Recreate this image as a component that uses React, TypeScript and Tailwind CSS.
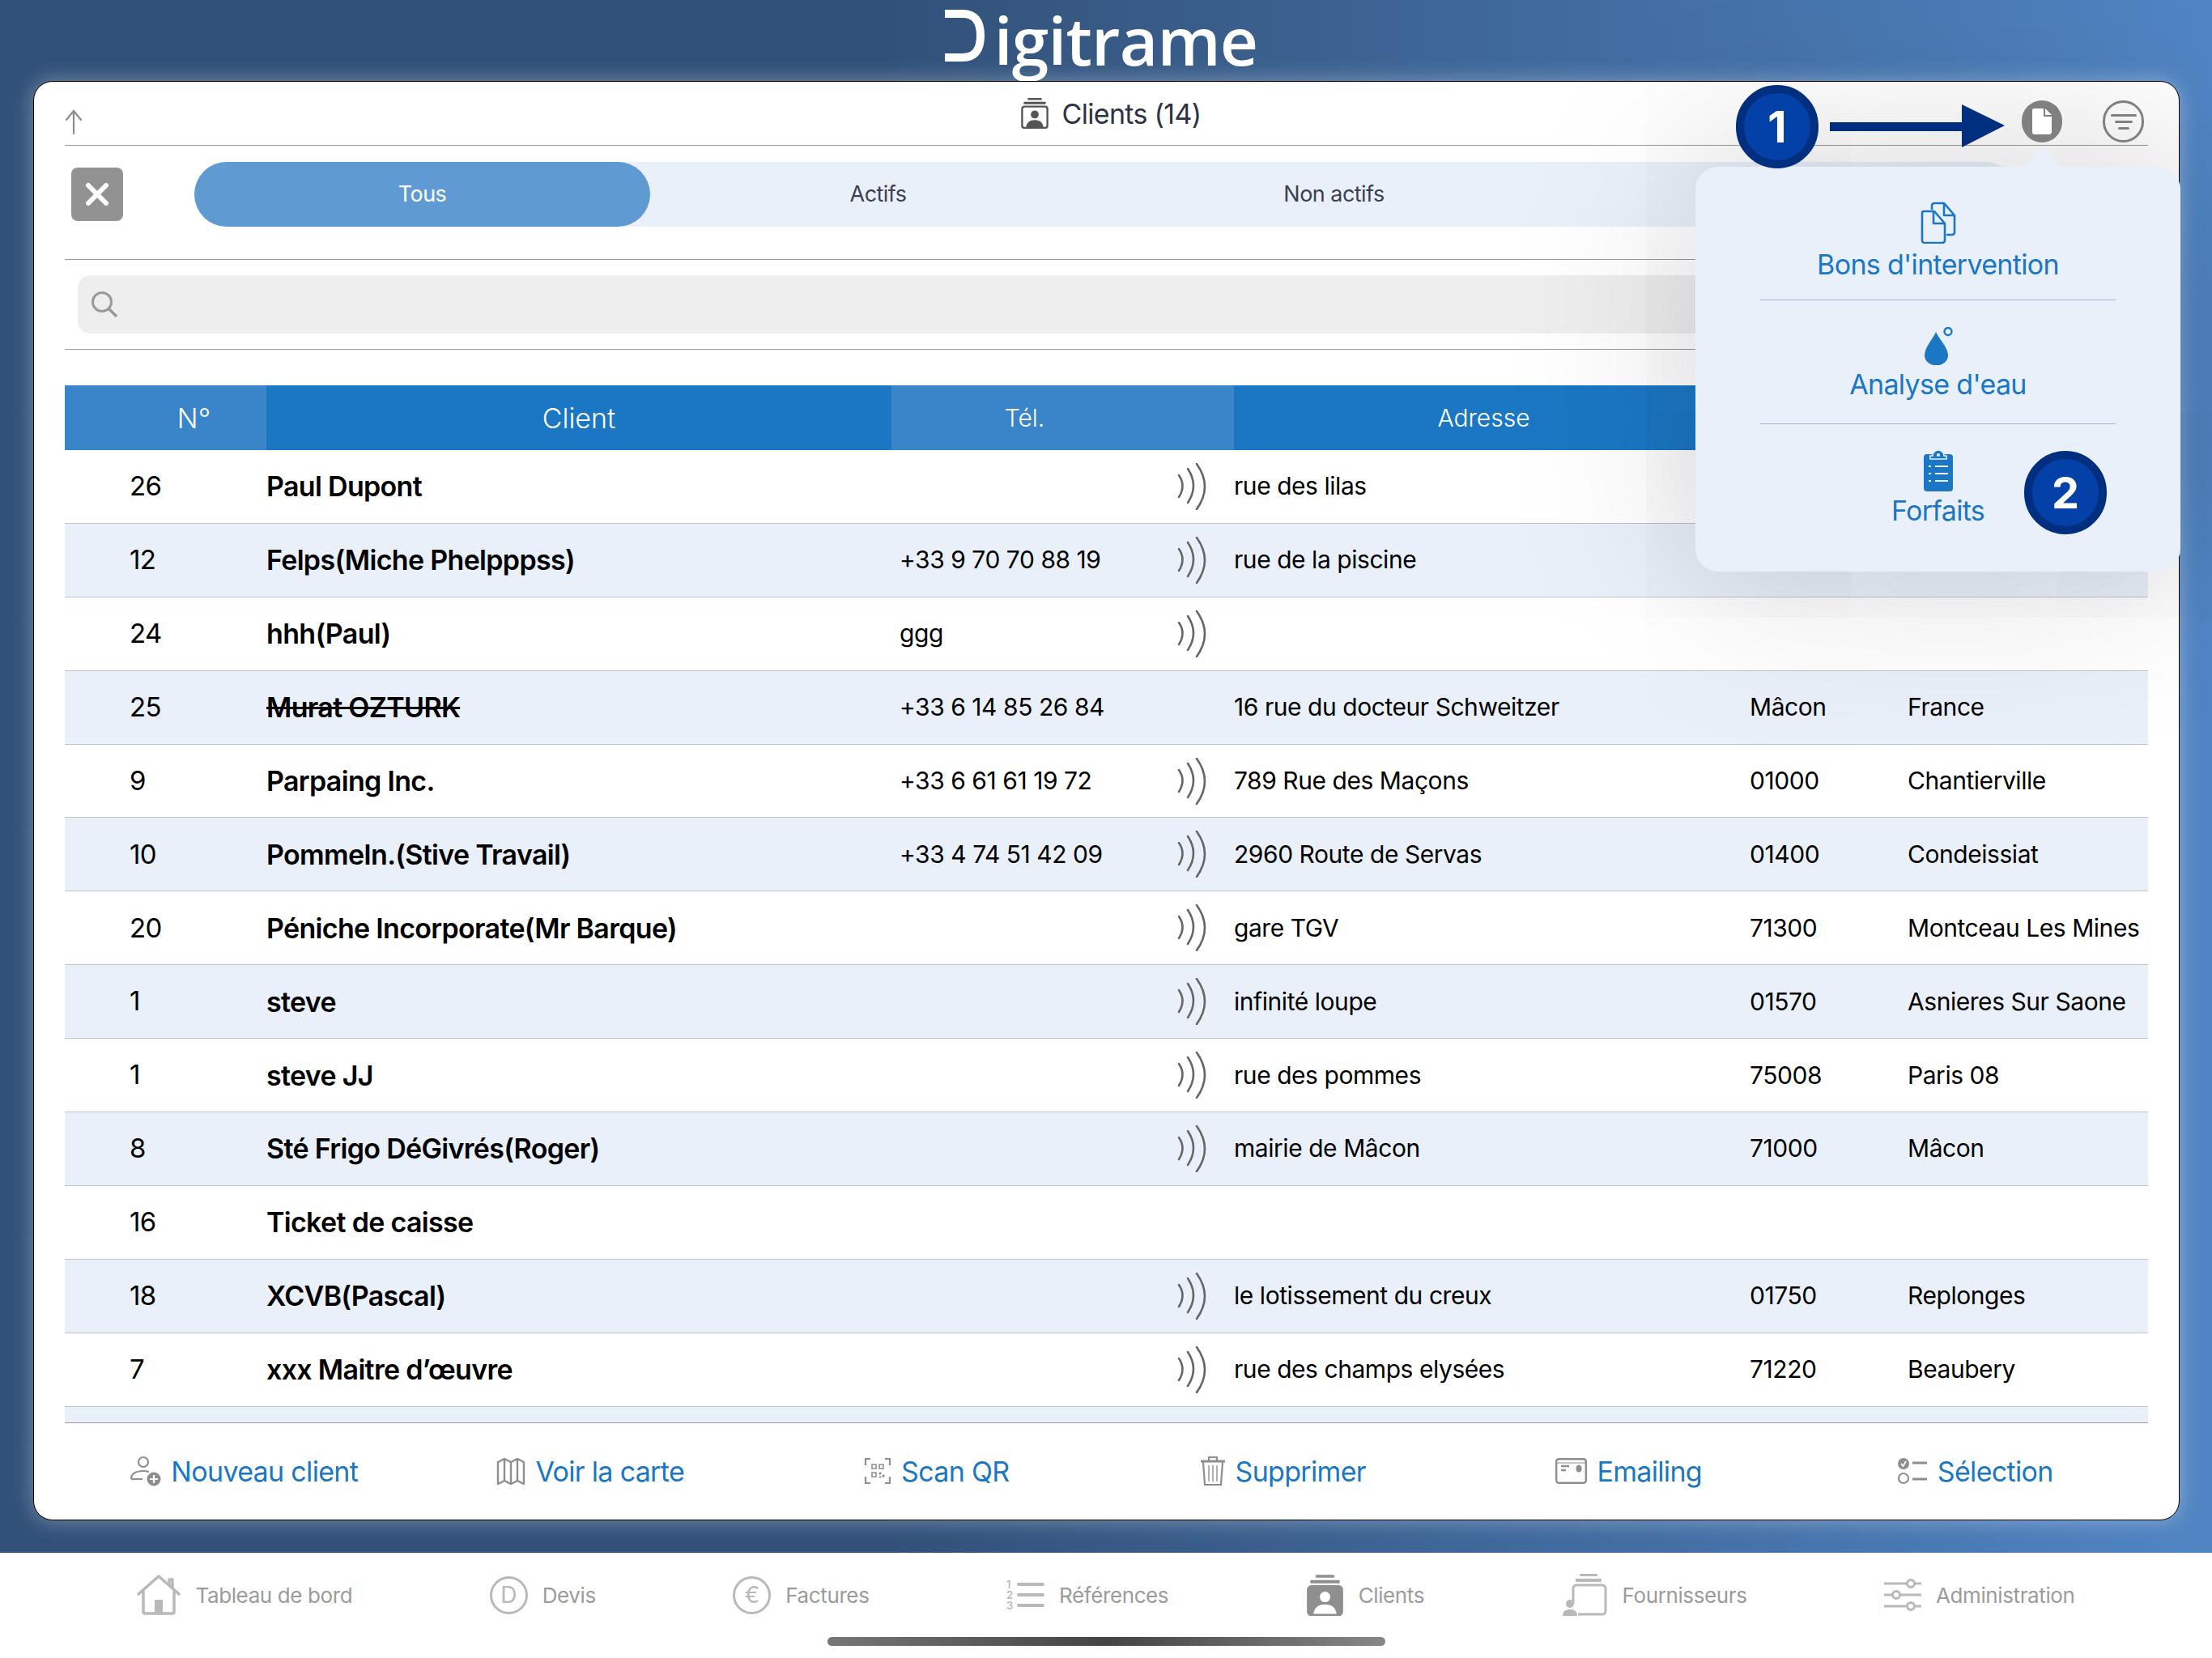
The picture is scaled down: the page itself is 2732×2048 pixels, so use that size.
const rows = [
  { n: "26", name: "Paul Dupont", tel: "", nfc: true, addr: "rue des lilas", cp: "", city: "" },
  { n: "12", name: "Felps(Miche Phelpppss)", tel: "+33 9 70 70 88 19", nfc: true, addr: "rue de la piscine", cp: "", city: "" },
  { n: "24", name: "hhh(Paul)", tel: "ggg", nfc: true, addr: "", cp: "", city: "" },
  { n: "25", name: "Murat OZTURK", tel: "+33 6 14 85 26 84", nfc: false, addr: "16 rue du docteur Schweitzer", cp: "Mâcon", city: "France", strike: true },
  { n: "9", name: "Parpaing Inc.", tel: "+33 6 61 61 19 72", nfc: true, addr: "789 Rue des Maçons", cp: "01000", city: "Chantierville" },
  { n: "10", name: "PommeIn.(Stive Travail)", tel: "+33 4 74 51 42 09", nfc: true, addr: "2960 Route de Servas", cp: "01400", city: "Condeissiat" },
  { n: "20", name: "Péniche Incorporate(Mr Barque)", tel: "", nfc: true, addr: "gare TGV", cp: "71300", city: "Montceau Les Mines" },
  { n: "1", name: "steve", tel: "", nfc: true, addr: "infinité loupe", cp: "01570", city: "Asnieres Sur Saone" },
  { n: "1", name: "steve JJ", tel: "", nfc: true, addr: "rue des pommes", cp: "75008", city: "Paris 08" },
  { n: "8", name: "Sté Frigo DéGivrés(Roger)", tel: "", nfc: true, addr: "mairie de Mâcon", cp: "71000", city: "Mâcon" },
  { n: "16", name: "Ticket de caisse", tel: "", nfc: false, addr: "", cp: "", city: "" },
  { n: "18", name: "XCVB(Pascal)", tel: "", nfc: true, addr: "le lotissement du creux", cp: "01750", city: "Replonges" },
  { n: "7", name: "xxx Maitre d’œuvre", tel: "", nfc: true, addr: "rue des champs elysées", cp: "71220", city: "Beaubery" },
];

function Nfc() {
  return (
    <svg width="36" height="58" viewBox="0 0 36 58" fill="none" stroke="#666" strokeWidth="2.6" strokeLinecap="round">
      <path d="M2 15Q11 28 2 42" />
      <path d="M13 7Q27 28 13 49" />
      <path d="M24 1Q44 29 24 57" />
    </svg>
  );
}

function ContactStack({ color, filled, w, h }: { color: string; filled?: boolean; w: number; h: number }) {
  return (
    <svg width={w} height={h} viewBox="0 0 36 40" fill="none">
      <rect x="9" y="1" width="18" height="2.6" rx="1" fill={color} />
      <rect x="4" y="6" width="28" height="3" rx="1" fill={color} />
      <rect x="2" y="12" width="32" height="27" rx="3" fill={filled ? color : "none"} stroke={color} strokeWidth="2.4" />
      <circle cx="18" cy="22" r="5" fill={filled ? "#fff" : color} />
      <path d="M7 38c1-7 6-9 11-9s10 2 11 9z" fill={filled ? "#fff" : color} />
    </svg>
  );
}

const footerIcons = {
  client: (
    <svg width="38" height="38" viewBox="0 0 38 38" fill="none" stroke="#8e8e8e" strokeWidth="2.2">
      <circle cx="16" cy="8" r="6" />
      <path d="M1 29c0-7 6-10 15-10 3 0 5 .4 7 1" />
      <path d="M1 29h14" />
      <circle cx="29" cy="29" r="8.5" fill="#8e8e8e" stroke="none" />
      <path d="M29 24v10M24 29h10" stroke="#fff" />
    </svg>
  ),
  map: (
    <svg width="36" height="33" viewBox="0 0 36 33" fill="none" stroke="#8e8e8e" strokeWidth="2.4" strokeLinejoin="round">
      <path d="M2 5l8-4 8 4 8-4 8 4v27l-8-4-8 4-8-4-8 4z" />
      <path d="M10 1v27M18 5v27M26 1v27" />
    </svg>
  ),
  qr: (
    <svg width="34" height="34" viewBox="0 0 34 34" fill="none" stroke="#8e8e8e" strokeWidth="2.2">
      <path d="M8 2H2v8M26 2h6v8M8 32H2v-8M26 32h6v-8" />
      <path d="M10 9h5v5h-5zM19 9h5v5h-5zM10 19h5v5h-5z" strokeWidth="1.6" />
      <path d="M19 19h2v2h-2zM23 22h2v2h-2zM19 24h2v1h-2z" fill="#8e8e8e" strokeWidth="1" />
    </svg>
  ),
  trash: (
    <svg width="32" height="38" viewBox="0 0 32 38" fill="none" stroke="#8e8e8e" strokeWidth="2.2">
      <path d="M1 7h30" strokeWidth="3" />
      <path d="M11 6V2h10v4" />
      <path d="M4 8l2 28h20l2-28" />
      <path d="M11 12v20M16 12v20M21 12v20" strokeWidth="1.4" />
    </svg>
  ),
  mail: (
    <svg width="39" height="32" viewBox="0 0 39 32" fill="none">
      <rect x="1.2" y="1.2" width="36.6" height="29.6" rx="3" stroke="#8e8e8e" strokeWidth="2.4" />
      <path d="M1 6h37" stroke="#8e8e8e" strokeWidth="1" />
      <path d="M7 10h10M7 15h6" stroke="#8e8e8e" strokeWidth="2.4" />
      <ellipse cx="29" cy="13" rx="3.5" ry="4.5" fill="#8e8e8e" />
    </svg>
  ),
  select: (
    <svg width="38" height="34" viewBox="0 0 38 34" fill="none">
      <circle cx="8" cy="8" r="7" fill="#8e8e8e" />
      <path d="M5 8l2.5 3L11 5" stroke="#fff" strokeWidth="1.8" />
      <circle cx="8" cy="26" r="6" stroke="#8e8e8e" strokeWidth="2.2" />
      <path d="M19 7h18M19 27h18" stroke="#8e8e8e" strokeWidth="3" />
    </svg>
  ),
};

const tools = [
  { icon: footerIcons.client, label: "Nouveau client" },
  { icon: footerIcons.map, label: "Voir la carte" },
  { icon: footerIcons.qr, label: "Scan QR" },
  { icon: footerIcons.trash, label: "Supprimer" },
  { icon: footerIcons.mail, label: "Emailing" },
  { icon: footerIcons.select, label: "Sélection" },
];

const tabs = [
  {
    label: "Tableau de bord",
    icon: (
      <svg width="54" height="50" viewBox="0 0 54 50" fill="none" stroke="#b9b9b9" strokeWidth="3.5" strokeLinejoin="round">
        <path d="M2 24L27 2l25 22" strokeLinecap="round" />
        <path d="M8 20v26a2 2 0 0 0 2 2h34a2 2 0 0 0 2-2V20" />
        <path d="M22 47V31h10v16z" fill="#b9b9b9" stroke="none" />
        <path d="M40 14V6h4v12" />
      </svg>
    ),
  },
  {
    label: "Devis",
    icon: (
      <div className="flex h-[47px] w-[47px] items-center justify-center rounded-full border-[3px] border-[#b9b9b9] text-[28px] leading-none text-[#b9b9b9]">D</div>
    ),
  },
  {
    label: "Factures",
    icon: (
      <div className="flex h-[47px] w-[47px] items-center justify-center rounded-full border-[3px] border-[#b9b9b9] text-[28px] leading-none text-[#b9b9b9]">€</div>
    ),
  },
  {
    label: "Références",
    icon: (
      <div className="flex w-[47px] flex-col gap-[2px] text-[13px] font-semibold leading-[11px] text-[#b9b9b9]">
        {["1", "2", "3"].map((d) => (
          <div key={d} className="flex items-center gap-[4px]">
            <span className="w-[9px]">{d}</span>
            <span className="h-[4px] flex-1 rounded-full bg-[#b9b9b9]" />
          </div>
        ))}
      </div>
    ),
  },
  { label: "Clients", icon: <ContactStack color="#8f8f8f" filled w={47} h={52} /> },
  {
    label: "Fournisseurs",
    icon: (
      <svg width="57" height="54" viewBox="0 0 57 54" fill="none">
        <rect x="22" y="1" width="22" height="3" rx="1" fill="#b9b9b9" />
        <rect x="17" y="7" width="32" height="4" rx="1" fill="#b9b9b9" />
        <path d="M14 38V19a4 4 0 0 1 4-4h32a4 4 0 0 1 4 4v28a4 4 0 0 1-4 4H20" stroke="#b9b9b9" strokeWidth="3" />
        <circle cx="10" cy="38" r="5" fill="#b9b9b9" />
        <path d="M1 53c0-6 4-8 9-8s9 2 9 8z" fill="#b9b9b9" />
      </svg>
    ),
  },
  {
    label: "Administration",
    icon: (
      <svg width="46" height="40" viewBox="0 0 46 40" fill="none" stroke="#b9b9b9" strokeWidth="3">
        <path d="M0 6h28M38 6h8M0 20h10M20 20h26M0 34h28M38 34h8" />
        <circle cx="33" cy="6" r="4.5" />
        <circle cx="15" cy="20" r="4.5" />
        <circle cx="33" cy="34" r="4.5" />
      </svg>
    ),
  },
];

function Badge({ n, pos }: { n: string; pos: string }) {
  return (
    <div className={`absolute flex h-[103px] w-[102px] items-center justify-center rounded-full border-[10px] border-[#002f80] bg-[#0340a8] text-[54px] font-bold text-white ${pos}`}>
      {n}
    </div>
  );
}

export default function App() {
  return (
    <div className="relative h-[2048px] w-[2732px] overflow-hidden bg-white font-['Inter',sans-serif] text-black">
      <div className="flex h-[1918px] flex-col bg-gradient-to-r from-[#325179] from-40% to-[#5085c4] pl-[41px] pr-[40px]">
        {/* logo */}
        <div className="flex h-[100px] items-start justify-center pr-[14px] pt-[11px] text-white">
          <svg width="52" height="66" viewBox="0 0 52 66" fill="none" stroke="#fff" strokeWidth="10" className="mr-[10px]">
            <path d="M1 6h22q22 0 22 27t-22 27H1" />
          </svg>
          <span className="font-['Open_Sans',sans-serif] text-[82px] font-semibold leading-[76px] tracking-[-0.01em]">igitrame</span>
        </div>

        <div className="flex h-[1778px] flex-col rounded-[24px] border border-black bg-white px-[38px] shadow-[0_0_26px_rgba(255,255,255,0.35)]">
          {/* title */}
          <div className="relative flex h-[79px] shrink-0 items-center justify-center border-b border-[#9a9a9a] pl-[10px]">
            <svg width="22" height="32" viewBox="0 0 22 32" fill="none" stroke="#8c8c8c" strokeWidth="2.2" strokeLinecap="round" className="absolute left-0 top-[34px]">
              <path d="M11 30V2M2 13L11 2l9 11" />
            </svg>
            <div className="mb-[2px] mr-[16px]"><ContactStack color="#555" w={36} h={39} /></div>
            <span className="text-[34px] tracking-[-0.02em] text-[#2d3344]">Clients (14)</span>
          </div>

          {/* filter */}
          <div className="flex h-[141px] shrink-0 items-start border-b border-[#9a9a9a] pt-[20px]">
            <div className="ml-[8px] mt-[7px] flex h-[66px] w-[64px] items-center justify-center rounded-[8px] bg-[#929292]">
              <svg width="30" height="30" viewBox="0 0 30 30" stroke="#fff" strokeWidth="6" strokeLinecap="round">
                <path d="M4 4l22 22M26 4L4 26" />
              </svg>
            </div>
            <div className="ml-[88px] grid h-[80px] w-[2252px] grid-cols-4 rounded-[40px] bg-[#e9f0fa] text-[27px] tracking-[-0.02em] text-[#3c4152]">
              <div className="flex items-center justify-center rounded-[40px] bg-[#5f9ad3] text-white">Tous</div>
              <div className="flex items-center justify-center">Actifs</div>
              <div className="flex items-center justify-center">Non actifs</div>
              <div />
            </div>
          </div>

          {/* search */}
          <div className="h-[111px] shrink-0 border-b border-[#9a9a9a] pl-[16px] pr-[12px] pt-[19px]">
            <div className="flex h-[72px] items-center rounded-[16px] bg-[#eeeeee] pl-[16px]">
              <svg width="34" height="34" viewBox="0 0 34 34" fill="none" stroke="#9a9a9a" strokeWidth="3">
                <circle cx="14" cy="14" r="11.5" />
                <path d="M22 22l10 10" strokeWidth="3.6" />
              </svg>
            </div>
          </div>

          {/* table */}
          <div className="mt-[44px] grid h-[80px] shrink-0 grid-cols-[249px_772px_423px_637px_195px_1fr] text-white">
            <div className="flex items-center justify-center bg-[#3a85c9] pl-[70px] text-[34px] font-light">N°</div>
            <div className="flex items-center justify-center bg-[#1b77c3] text-[34px] font-light">Client</div>
            <div className="flex items-center justify-center bg-[#3a85c9] pr-[94px] text-[30px] font-light">Tél.</div>
            <div className="flex items-center justify-center bg-[#1b77c3] pr-[20px] text-[30px] font-light">Adresse</div>
            <div className="bg-[#3a85c9]" />
            <div className="bg-[#1b77c3]" />
          </div>
          {rows.map((r, i) => (
            <div
              key={r.name}
              className={`grid h-[90.9px] shrink-0 grid-cols-[249px_772px_423px_637px_195px_1fr] items-center border-b border-[#bfc3cb] text-[30px] tracking-[-0.015em] ${i % 2 ? "bg-[#e9f0fa]" : "bg-white"}`}
            >
              <div className="pl-[80px] text-[33px] tracking-[-0.02em]">{r.n}</div>
              <div className={`text-[34px] font-semibold tracking-[-0.02em] ${r.strike ? "line-through" : ""}`}>{r.name}</div>
              <div className="flex items-center justify-between pl-[10px] pr-[34px]">
                <span>{r.tel}</span>
                {r.nfc && <Nfc />}
              </div>
              <div>{r.addr}</div>
              <div>{r.cp}</div>
              <div className="whitespace-nowrap">{r.city}</div>
            </div>
          ))}
          <div className="h-[20px] shrink-0 border-b border-[#9498a8] bg-[#e9f0fa]" />

          {/* actions */}
          <div className="grid flex-1 grid-cols-6 items-center pl-[8px] text-[34px] tracking-[-0.02em] text-[#1b77c3]">
            {tools.map((t) => (
              <div key={t.label} className="flex items-center justify-center gap-[12px]">
                {t.icon}
                <span>{t.label}</span>
              </div>
            ))}
          </div>
        </div>
      </div>

      {/* tab bar */}
      <div className="flex h-[104px] items-center justify-evenly text-[26px] tracking-[-0.015em] text-[#9b9b9b]">
        {tabs.map((t) => (
          <div key={t.label} className="flex items-center gap-[18px]">
            {t.icon}
            <span>{t.label}</span>
          </div>
        ))}
      </div>
      <div className="mx-auto h-[11px] w-[689px] rounded-full bg-gradient-to-r from-[#777] via-[#444] to-[#888]" />

      {/* popover */}
      <div className="absolute left-[2094px] top-[206px] h-[500px] w-[599px] rounded-[28px] bg-[#e9f0fa] text-[34px] leading-[40px] tracking-[-0.02em] text-[#1b77c3] shadow-[0_0_220px_rgba(0,0,0,0.22)]">
        <div className="mx-[80px] flex h-[165px] flex-col items-center border-b border-[#a9b4cc] pt-[43px]">
          <svg width="44" height="52" viewBox="0 0 44 52" fill="none" stroke="#1b77c3" strokeWidth="2.6" strokeLinejoin="round">
            <path d="M14 10V5a3 3 0 0 1 3-3h12l13 15v21a3 3 0 0 1-3 3h-7" />
            <path d="M29 2v15h13" />
            <path d="M4 12h13l13 15v21a3 3 0 0 1-3 3H5a3 3 0 0 1-3-3V14a2 2 0 0 1 2-2z" fill="#e9f0fa" />
            <path d="M16 12v15h14" />
          </svg>
          <span className="mt-[6px]">Bons d'intervention</span>
        </div>
        <div className="mx-[80px] flex h-[153px] flex-col items-center border-b border-[#a9b4cc] pt-[33px]">
          <svg width="36" height="47" viewBox="0 0 36 47" fill="#1b77c3">
            <path d="M15 6C11 15 1 25 1 35a14 12 0 0 0 29 0C30 25 19 15 15 6z" />
            <circle cx="30" cy="5.500" r="4.500" fill="none" stroke="#1b77c3" strokeWidth="2.400" />
          </svg>
          <span className="mt-[4px]">Analyse d'eau</span>
        </div>
        <div className="flex flex-col items-center pt-[31px]">
          <svg width="36" height="52" viewBox="0 0 36 52">
            <rect x="0" y="6" width="36" height="46" rx="4" fill="#1b77c3" />
            <path d="M11 8a7 7 0 0 1 14 0h3v4H8V8z" fill="#1b77c3" stroke="#e9f0fa" strokeWidth="1.6" />
            <circle cx="18" cy="7" r="2" fill="#e9f0fa" />
            <path d="M14 21h16M14 30h16M14 39h16" stroke="#e9f0fa" strokeWidth="2.2" />
            <path d="M6 21h3M6 30h3M6 39h3" stroke="#e9f0fa" strokeWidth="2.2" />
          </svg>
          <span className="mt-[4px]">Forfaits</span>
        </div>
      </div>

      {/* callouts */}
      <svg width="62" height="27" viewBox="0 0 62 27" className="absolute left-[2491px] top-[181px]" fill="#e9f0fa">
        <path d="M0 27c12-2 18-14 26-24 3-4 7-4 10 0 8 10 14 22 26 24z" />
      </svg>
      <div className="absolute left-[2497px] top-[124px] flex h-[52px] w-[50px] items-center justify-center rounded-full bg-[#808080]">
        <svg width="24" height="32" viewBox="0 0 24 32" fill="#fff">
          <path d="M2 0h12v10h10v19a3 3 0 0 1-3 3H3a3 3 0 0 1-3-3V2a2 2 0 0 1 2-2z" />
          <path d="M16 0l8 8h-8z" />
        </svg>
      </div>
      <div className="absolute left-[2597px] top-[124px] flex h-[52px] w-[51px] flex-col items-center justify-center gap-[5px] rounded-full border-[3px] border-[#808080]">
        <div className="h-[3px] w-[32px] rounded-full bg-[#808080]" />
        <div className="h-[3px] w-[22px] rounded-full bg-[#808080]" />
        <div className="h-[3px] w-[14px] rounded-full bg-[#808080]" />
      </div>
      <svg width="216" height="53" viewBox="0 0 216 53" className="absolute left-[2260px] top-[129px]" fill="#002f80">
        <path d="M0 22h163V0l53 26-53 27V33H0z" />
      </svg>
      <Badge n="1" pos="left-[2144px] top-[105px]" />
      <Badge n="2" pos="left-[2500px] top-[557px]" />
    </div>
  );
}
